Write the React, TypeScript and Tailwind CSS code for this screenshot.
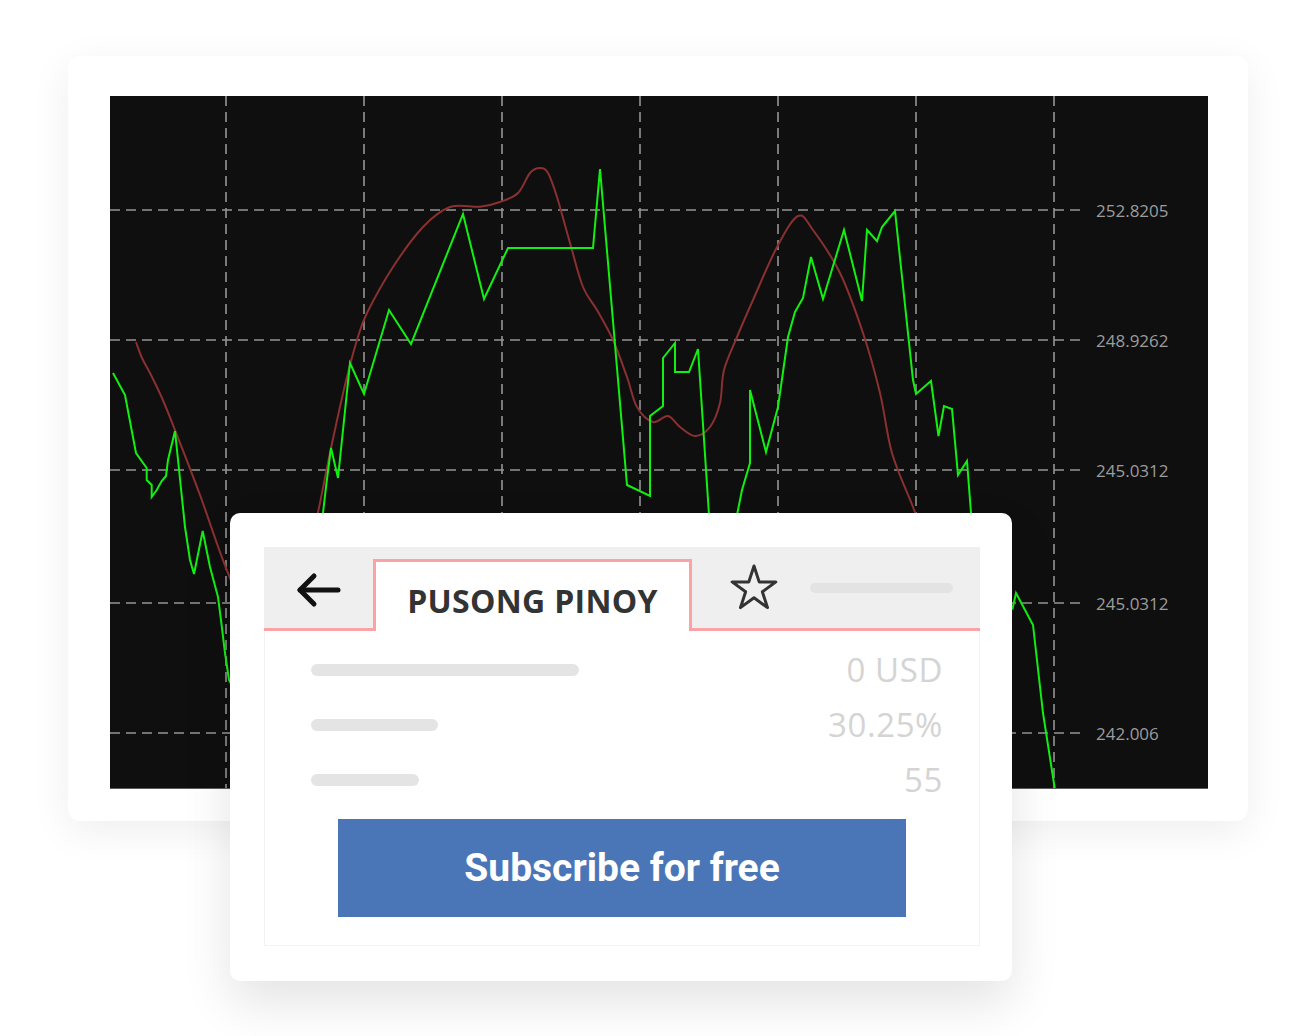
type Pt = [number, number];

// price series, in page coordinates (chart viewBox matches the page)
const GREEN: Pt[] = [
  [113, 373], [125, 395], [136, 453], [146.7, 468], [146.7, 480], [151.7, 485], [151.7, 497],
  [156.7, 490], [161.7, 481], [166, 476], [168, 460], [175, 431], [185, 527], [190, 560],
  [194, 574], [202.7, 531], [210, 567], [218, 597], [221, 620], [225, 653], [229, 680],
  [240, 700], [280, 640], [310, 560], [323, 513], [326, 487], [331, 448], [338, 478],
  [350, 363], [364, 394], [389, 310], [411, 344], [463, 214], [484, 299], [508, 248],
  [593, 248], [600, 169], [627, 485], [650, 496], [650, 416], [663, 406], [663, 358],
  [675, 343], [675, 372], [689, 372], [698, 349], [709, 515], [720, 560], [735, 525],
  [738, 510], [742, 490], [750, 463], [750, 390], [766, 452], [778, 407], [788, 337],
  [795, 312], [803, 298], [811, 257], [823, 299], [844, 230], [862, 301], [867, 230],
  [877, 241], [882, 227], [895, 211], [913, 380], [916, 394], [931, 381], [938.5, 436],
  [944, 406], [952, 409], [958, 475], [967, 461], [971, 513], [985, 560], [1000, 590],
  [1012.7, 608], [1016, 593], [1033, 625], [1043, 713], [1055, 790],
];

// moving average
const RED: Pt[] = [
  [136, 342], [142, 358], [150, 373], [162, 398], [175, 430], [200, 495], [228, 573],
  [260, 640], [300, 590], [317, 517], [330, 453], [345, 385], [357, 340], [367, 313],
  [393, 267], [423, 227], [450, 207], [480, 206.7], [500, 202], [518, 193], [530, 173],
  [540, 168], [548, 173], [557, 197], [570, 243], [583, 287], [597, 310], [613, 340],
  [627, 377], [637, 407], [653, 422], [668, 416], [680, 427], [695, 436], [710, 427],
  [720, 403], [724, 370], [737, 337], [753, 300], [777, 247], [798, 216], [813, 230],
  [840, 273], [863, 333], [880, 393], [892, 453], [913, 507], [925, 540],
];

const V_LINES = [226, 364, 502, 640, 778, 916, 1054];
const H_LINES = [
  { y: 210, label: '252.8205' },
  { y: 340, label: '248.9262' },
  { y: 470, label: '245.0312' },
  { y: 603, label: '245.0312' },
  { y: 733, label: '242.006' },
];

const smoothPath = (pts: Pt[]) => {
  let d = `M${pts[0][0]},${pts[0][1]}`;
  for (let i = 0; i < pts.length - 1; i++) {
    const p0 = pts[i - 1] || pts[i];
    const p1 = pts[i];
    const p2 = pts[i + 1];
    const p3 = pts[i + 2] || p2;
    const c1x = p1[0] + (p2[0] - p0[0]) / 6;
    const c1y = p1[1] + (p2[1] - p0[1]) / 6;
    const c2x = p2[0] - (p3[0] - p1[0]) / 6;
    const c2y = p2[1] - (p3[1] - p1[1]) / 6;
    d += ` C${c1x},${c1y} ${c2x},${c2y} ${p2[0]},${p2[1]}`;
  }
  return d;
};

const PriceChart = () => (
  <svg width={1098} height={693} viewBox="110 96 1098 693" className="block">
    <rect x={110} y={96} width={1098} height={693} fill="#0f0f0f" />
    {/* grid */}
    {H_LINES.map((l) => (
      <line key={l.y} x1={110} x2={1083} y1={l.y} y2={l.y} stroke="#959595" strokeWidth={1.6} strokeDasharray="10 6" />
    ))}
    {V_LINES.map((x) => (
      <line key={x} x1={x} x2={x} y1={96} y2={789} stroke="#959595" strokeWidth={1.6} strokeDasharray="10 6" />
    ))}
    {H_LINES.map((l, i) => (
      <text
        key={i}
        x={1096}
        y={l.y + 2.5}
        dominantBaseline="middle"
        fill="#9c9c9c"
        fontSize={17}
        fontFamily="'Open Sans', sans-serif"
      >
        {l.label}
      </text>
    ))}
    <path d={smoothPath(RED)} fill="none" stroke="#8a3030" strokeWidth={2} />
    <polyline
      points={GREEN.map((p) => p.join(',')).join(' ')}
      fill="none"
      stroke="#12f012"
      strokeWidth={2}
      strokeLinejoin="miter"
    />
    <line x1={110} x2={1208} y1={788.5} y2={788.5} stroke="#5c5c5c" strokeWidth={1} />
  </svg>
);

const BackArrow = () => (
  <svg width={46} height={36} viewBox="0 0 46 36" fill="none" stroke="#111" strokeWidth={5} strokeLinecap="round" strokeLinejoin="round">
    <path d="M4 18 H42" />
    <path d="M18 4 L4 18 L18 32" />
  </svg>
);

const StarOutline = () => (
  <svg width={50} height={50} viewBox="0 0 50 50" fill="none" stroke="#333" strokeWidth={3} strokeLinejoin="round">
    <polygon points="25,3 30.17,18.89 46.87,18.89 33.36,28.72 38.52,44.61 25,34.79 11.48,44.61 16.64,28.72 3.13,18.89 19.83,18.89" />
  </svg>
);

const StatRow = ({ barWidth, value }: { barWidth: string; value: string }) => (
  <div className="flex h-[55px] items-center justify-between">
    <div className={`h-[12px] rounded-full bg-[#e4e4e4] ${barWidth}`}></div>
    <span className="text-[33px] leading-none tracking-[0.6px] text-[#d4d4d4]">{value}</span>
  </div>
);

export default function App() {
  return (
    <div className="h-[1036px] w-[1312px] overflow-hidden bg-white pt-[56px] font-['Open_Sans',sans-serif]">
      {/* chart card */}
      <div className="ml-[68px] h-[765px] w-[1180px] rounded-xl bg-white pb-[32px] pl-[42px] pr-[40px] pt-[40px] shadow-[0_10px_40px_rgba(0,0,0,0.07)]">
        <PriceChart />
      </div>

      {/* subscribe card */}
      <div className="relative z-10 -mt-[308px] ml-[230px] h-[468px] w-[782px] rounded-[10px] bg-white pb-[35px] pl-[34px] pr-[32px] pt-[34px] shadow-[0_22px_50px_rgba(0,0,0,0.11)]">
        <div className="flex h-full flex-col">
          <div className="flex h-[84px] bg-[#efefef]">
            <div className="flex w-[109px] items-center justify-center border-b-[3px] border-[#f9a3a6] pt-[4px]">
              <BackArrow />
            </div>
            <div className="flex h-[72px] w-[319px] items-start justify-center self-end border-[3px] border-b-0 border-[#f9a3a6] bg-white pt-[23px]">
              <span className="text-[32px] font-bold leading-none tracking-[0.3px] text-[#333]">PUSONG PINOY</span>
            </div>
            <div className="flex flex-1 items-center justify-between border-b-[3px] border-[#f9a3a6] pl-[37px] pr-[27px]">
              <StarOutline />
              <div className="h-[10px] w-[143px] rounded-full bg-[#e3e3e3]"></div>
            </div>
          </div>

          <div className="flex flex-1 flex-col border-x border-b border-[#f2f2f2] pb-[28px] pl-[46px] pr-[36px] pt-[11px]">
            <StatRow barWidth="w-[268px]" value="0 USD" />
            <StatRow barWidth="w-[127px]" value="30.25%" />
            <StatRow barWidth="w-[108px]" value="55" />
            <button className="mt-[12px] ml-[27px] flex h-[98px] w-[568px] items-center justify-center bg-[#4a76b8] font-['Roboto',sans-serif] text-[39px] font-bold text-white">
              Subscribe for free
            </button>
          </div>
        </div>
      </div>
    </div>
  );
}
